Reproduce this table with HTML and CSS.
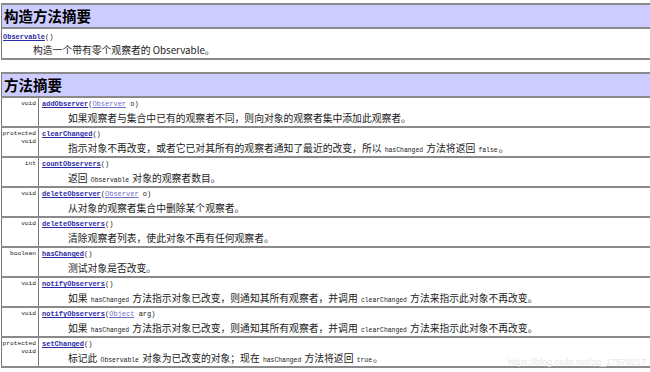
FILE: index.html
```html
<!DOCTYPE html>
<html>
<head>
<meta charset="utf-8">
<link rel="stylesheet" href="styles.css">
</head>
<body>
<div class="page">
  <table class="summary ctor">
    <tr class="head"><th>构造方法摘要</th></tr>
    <tr>
      <td class="member">
        <div class="sig"><a class="name">Observable</a>()</div>
        <div class="desc">构造一个带有零个观察者的 Observable。</div>
      </td>
    </tr>
  </table>

  <table class="summary methods">
    <tr class="head"><th colspan="2">方法摘要</th></tr>
    <tr>
      <td class="type">void</td>
      <td class="member">
        <div class="sig"><a class="name">addObserver</a>(<a class="ref">Observer</a> o)</div>
        <div class="desc">如果观察者与集合中已有的观察者不同，则向对象的观察者集中添加此观察者。</div>
      </td>
    </tr>
    <tr>
      <td class="type">protected<br>void</td>
      <td class="member">
        <div class="sig"><a class="name">clearChanged</a>()</div>
        <div class="desc">指示对象不再改变，或者它已对其所有的观察者通知了最近的改变，所以 <code>hasChanged</code> 方法将返回 <code>false</code>。</div>
      </td>
    </tr>
    <tr>
      <td class="type">int</td>
      <td class="member">
        <div class="sig"><a class="name">countObservers</a>()</div>
        <div class="desc">返回 <code>Observable</code> 对象的观察者数目。</div>
      </td>
    </tr>
    <tr>
      <td class="type">void</td>
      <td class="member">
        <div class="sig"><a class="name">deleteObserver</a>(<a class="ref">Observer</a> o)</div>
        <div class="desc">从对象的观察者集合中删除某个观察者。</div>
      </td>
    </tr>
    <tr>
      <td class="type">void</td>
      <td class="member">
        <div class="sig"><a class="name">deleteObservers</a>()</div>
        <div class="desc">清除观察者列表，使此对象不再有任何观察者。</div>
      </td>
    </tr>
    <tr>
      <td class="type">boolean</td>
      <td class="member">
        <div class="sig"><a class="name">hasChanged</a>()</div>
        <div class="desc">测试对象是否改变。</div>
      </td>
    </tr>
    <tr>
      <td class="type">void</td>
      <td class="member">
        <div class="sig"><a class="name">notifyObservers</a>()</div>
        <div class="desc">如果 <code>hasChanged</code> 方法指示对象已改变，则通知其所有观察者，并调用 <code>clearChanged</code> 方法来指示此对象不再改变。</div>
      </td>
    </tr>
    <tr>
      <td class="type">void</td>
      <td class="member">
        <div class="sig"><a class="name">notifyObservers</a>(<a class="ref">Object</a> arg)</div>
        <div class="desc">如果 <code>hasChanged</code> 方法指示对象已改变，则通知其所有观察者，并调用 <code>clearChanged</code> 方法来指示此对象不再改变。</div>
      </td>
    </tr>
    <tr>
      <td class="type">protected<br>void</td>
      <td class="member">
        <div class="sig"><a class="name">setChanged</a>()</div>
        <div class="desc">标记此 <code>Observable</code> 对象为已改变的对象；现在 <code>hasChanged</code> 方法将返回 <code>true</code>。</div>
      </td>
    </tr>
  </table>
  <div class="watermark">https://blog.csdn.net/qq_17578217</div>
</div>
</body>
</html>
```

FILE: styles.css
```css
html, body {
  margin: 0;
  padding: 0;
  background: #ffffff;
  overflow: hidden;
}

.page {
  position: relative;
  width: 720px;
  height: 372px;
  padding: 3px 0 0 1px;
  box-sizing: border-box;
  font-family: "Noto Sans CJK SC", "Noto Sans", sans-serif;
  color: #111;
}

.summary {
  border-collapse: collapse;
  width: 700px;
}

.summary th,
.summary td {
  border-top: 2px solid #8a8a8a;
  border-bottom: 2px solid #8a8a8a;
  border-left: 1px solid #7a7a7a;
  border-right: 1px solid #7a7a7a;
  padding: 0;
  vertical-align: top;
}

.head th {
  background: #ccccff;
  text-align: left;
  font-size: 14.5px;
  font-weight: bold;
  line-height: 22px;
  height: 22px;
  padding-left: 2px;
  color: #000;
}

.methods {
  margin-top: 12px;
}

.type {
  width: 34px;
  text-align: right;
  padding: 2px 2px 0 0 !important;
  font-family: "Liberation Mono", monospace;
  font-size: 6.2px;
  line-height: 8px;
  color: #222;
}

.member {
  padding: 1px 0 0 3px !important;
}

.methods .member {
  height: 28px;
  box-sizing: border-box;
}

.ctor .member {
  padding: 3px 0 1px 1px !important;
}

.sig {
  font-family: "Liberation Mono", monospace;
  font-size: 7px;
  line-height: 11px;
  height: 11px;
  color: #222;
}

.sig .name {
  font-weight: bold;
  color: #2b2ba8;
  text-decoration: underline;
}

.sig .ref {
  color: #7070c8;
  text-decoration: underline;
}

.desc {
  padding-left: 26px;
  font-size: 9.8px;
  line-height: 16px;
  height: 16px;
  color: #1a1a1a;
  white-space: nowrap;
}

.ctor .desc {
  padding-left: 30px;
  line-height: 14px;
  height: 14px;
}

.desc code {
  font-family: "Liberation Mono", monospace;
  font-size: 6.4px;
  line-height: 1;
  margin: 0 1px;
}

.watermark {
  position: absolute;
  left: 508px;
  top: 357px;
  font-family: "Liberation Sans", sans-serif;
  font-size: 9px;
  color: #e6e6e6;
  white-space: nowrap;
}
```
